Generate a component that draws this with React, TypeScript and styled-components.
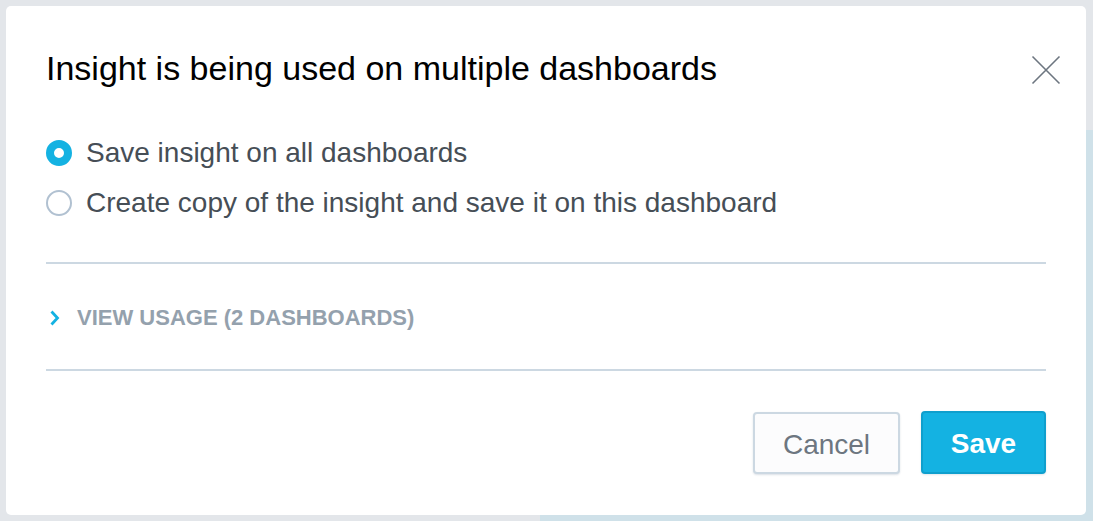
import React, { useState } from "react";
import styled, { createGlobalStyle } from "styled-components";

const Global = createGlobalStyle`
  html, body { margin: 0; padding: 0; }
  body {
    width: 1093px;
    height: 521px;
    overflow: hidden;
    font-family: "Liberation Sans", Arial, sans-serif;
  }
`;

const Backdrop = styled.div`
  position: relative;
  width: 1093px;
  height: 521px;
  background: #e3e6ea;
  overflow: hidden;
`;

const BluePanel = styled.div`
  position: absolute;
  left: 540px;
  top: 130px;
  right: 0;
  bottom: 0;
  background: #cfe1e9;
`;

const Overlay = styled.div`
  position: absolute;
  inset: 0;
  padding: 6px 7px 6px 6px;
  display: flex;
`;

const Dialog = styled.div`
  position: relative;
  flex: 1;
  background: #ffffff;
  border-radius: 5px;
  padding: 40px 40px 41px 40px;
  display: flex;
  flex-direction: column;
  box-sizing: border-box;
`;

const Title = styled.h1`
  margin: 0;
  font-size: 34px;
  line-height: 44px;
  font-weight: 400;
  color: #000000;
`;

const CloseButton = styled.button`
  position: absolute;
  top: 49px;
  right: 25px;
  width: 30px;
  height: 30px;
  padding: 0;
  border: none;
  background: transparent;
  display: flex;
  align-items: center;
  justify-content: center;
`;

const RadioList = styled.div`
  margin-top: 38px;
  display: flex;
  flex-direction: column;
`;

const RadioRow = styled.label`
  height: 50px;
  display: flex;
  align-items: center;
  gap: 14px;
  font-size: 28px;
  color: #464e56;
  cursor: pointer;
`;

const RadioCircle = styled.span<{ $checked: boolean }>`
  width: 26px;
  height: 26px;
  box-sizing: border-box;
  border-radius: 50%;
  flex-shrink: 0;
  background: #ffffff;
  border: ${(p) => (p.$checked ? "8px solid #14b2e2" : "2px solid #b1c1d1")};
`;

const Divider = styled.hr<{ $top: number }>`
  margin: ${(p) => p.$top}px 0 0 0;
  border: none;
  height: 2px;
  background: #ccd8e2;
`;

const UsageToggle = styled.button`
  height: 105px;
  padding: 2px 0 0 2px;
  border: none;
  background: transparent;
  display: flex;
  align-items: center;
  gap: 15px;
  font-family: "Liberation Sans", Arial, sans-serif;
  font-size: 22px;
  font-weight: 700;
  color: #94a1ad;
  text-transform: uppercase;
  cursor: pointer;
`;

const Footer = styled.div`
  margin-top: auto;
  display: flex;
  justify-content: flex-end;
  align-items: flex-end;
  gap: 21px;
`;

const Button = styled.button<{ $primary?: boolean }>`
  height: ${(p) => (p.$primary ? "63px" : "62px")};
  padding: 3px 0 0 0;
  width: ${(p) => (p.$primary ? "125px" : "147px")};
  border-radius: 4px;
  font-family: "Liberation Sans", Arial, sans-serif;
  font-size: 28px;
  font-weight: ${(p) => (p.$primary ? 700 : 400)};
  color: ${(p) => (p.$primary ? "#ffffff" : "#6d7680")};
  background: ${(p) => (p.$primary ? "#14b2e2" : "#fcfcfd")};
  border: 2px solid ${(p) => (p.$primary ? "#0f9fcd" : "#ccd8e2")};
  box-shadow: ${(p) =>
    p.$primary ? "0 1px 2px rgba(20, 60, 90, 0.12)" : "0 1px 2px rgba(20, 56, 93, 0.15)"};
  cursor: pointer;
`;

export default function App() {
  const [choice, setChoice] = useState(0);
  const options = [
    "Save insight on all dashboards",
    "Create copy of the insight and save it on this dashboard",
  ];
  return (
    <>
      <Global />
      <Backdrop>
        <BluePanel />
        <Overlay>
          <Dialog>
            <Title>Insight is being used on multiple dashboards</Title>
            <CloseButton aria-label="Close">
              <svg width="30" height="30" viewBox="0 0 30 30">
                <path
                  d="M1.5 1.5 L28.5 28.5 M28.5 1.5 L1.5 28.5"
                  stroke="#6d7680"
                  strokeWidth="1.6"
                  fill="none"
                />
              </svg>
            </CloseButton>
            <RadioList>
              {options.map((o, i) => (
                <RadioRow key={o} onClick={() => setChoice(i)}>
                  <RadioCircle $checked={choice === i} />
                  {o}
                </RadioRow>
              ))}
            </RadioList>
            <Divider $top={34} />
            <UsageToggle>
              <svg width="14" height="20" viewBox="0 0 14 20">
                <path
                  d="M3.5 3.5 L9.5 10 L3.5 16.5"
                  stroke="#14b2e2"
                  strokeWidth="2.8"
                  fill="none"
                />
              </svg>
              View usage (2 dashboards)
            </UsageToggle>
            <Divider $top={0} />
            <Footer>
              <Button>Cancel</Button>
              <Button $primary>Save</Button>
            </Footer>
          </Dialog>
        </Overlay>
      </Backdrop>
    </>
  );
}
